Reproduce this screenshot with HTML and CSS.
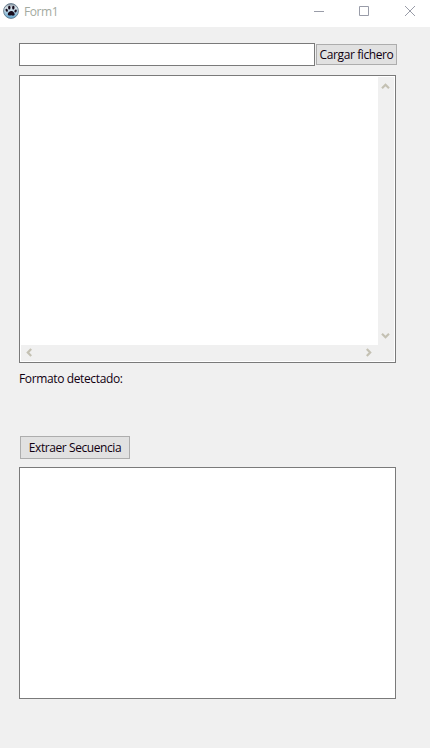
FILE: index.html
```html
<!DOCTYPE html>
<html lang="es">
<head>
<meta charset="utf-8">
<title>Form1</title>
<link rel="stylesheet" href="styles.css">
</head>
<body>
<header class="titlebar">
  <svg class="app-icon" width="16" height="16" viewBox="0 0 16 16">
    <defs><linearGradient id="ball" x1="0" y1="0" x2="0" y2="1"><stop offset="0" stop-color="#8794a0"/><stop offset=".3" stop-color="#dce6ec"/><stop offset="1" stop-color="#5fa5cf"/></linearGradient></defs>
    <circle cx="8" cy="8" r="7.4" fill="url(#ball)" stroke="#607688" stroke-width=".9"/>
    <g fill="#170b1c">
      <ellipse cx="6.300" cy="4.700" rx="1.200" ry="1.900"/><ellipse cx="10.300" cy="4.700" rx="1.200" ry="1.900"/>
      <ellipse cx="3.700" cy="7.300" rx="1.100" ry="1.600" transform="rotate(-25 3.7 7.3)"/><ellipse cx="12.600" cy="8" rx="1.100" ry="1.600" transform="rotate(25 12.6 8)"/>
      <path d="M8.400 8C10 8 11.900 10.200 11.700 11.600c-.2 1.200-1.700 1.400-3.500.7-1.900.4-3.400.1-3.400-1.100C4.800 9.800 6.800 8 8.400 8z"/>
    </g>
  </svg>
  <span class="title">Form1</span>
  <div class="window-controls">
    <svg width="45" height="27" viewBox="0 0 45 27"><path d="M17 11.500h10"/></svg>
    <svg width="45" height="27" viewBox="0 0 45 27"><path d="M17.500 6.500h9v9h-9z"/></svg>
    <svg width="45" height="27" viewBox="0 0 45 27"><path d="M18 6l10 10M28 6L18 16"/></svg>
  </div>
</header>
<main class="form">
  <div class="file-row">
    <div class="edit"></div>
    <button class="button load"><span>Cargar fichero</span></button>
  </div>
  <div class="memo source">
    <div class="text-area"></div>
    <div class="scroll vertical">
      <svg width="9" height="7" viewBox="0 0 9 7"><path d="M1 5.200L4.500 1.800L8 5.200"/></svg>
      <svg width="9" height="7" viewBox="0 0 9 7"><path d="M1 1.800L4.500 5.200L8 1.800"/></svg>
    </div>
    <div class="scroll horizontal">
      <svg width="7" height="9" viewBox="0 0 7 9"><path d="M5.200 1L1.800 4.500L5.200 8"/></svg>
      <svg width="7" height="9" viewBox="0 0 7 9"><path d="M1.800 1L5.200 4.500L1.800 8"/></svg>
    </div>
    <div class="corner"></div>
  </div>
  <div class="format-label"><span>Formato detectado:</span></div>
  <button class="button extract"><span>Extraer Secuencia</span></button>
  <div class="memo result"></div>
</main>
</body>
</html>
```
FILE: styles.css
```css
* { box-sizing: border-box; }
body {
  margin: 0;
  height: 748px;
  overflow: hidden;
  background: #f0f0f0;
  color: #100010;
  font: 12px/16px "Open Sans", "Noto Sans", sans-serif;
  white-space: nowrap;
}
svg { display: block; }
.titlebar {
  display: flex;
  height: 27px;
  padding-left: 3px;
  background: #fff;
}
.app-icon { margin-top: 3px; }
.title {
  margin: 4px 0 0 5px;
  color: #a3aaa0;
  letter-spacing: -0.4px;
}
.window-controls {
  display: flex;
  margin-left: auto;
  margin-right: -2px;
}
.window-controls path {
  fill: none;
  stroke: #999ca8;
  stroke-width: 1;
}
.form { padding: 16px 33px 0 19px; }
.file-row {
  display: flex;
  align-items: center;
  gap: 1px;
}
.edit {
  width: 296px;
  height: 23px;
  border: 1px solid #7a7a7a;
  background: #fff;
}
.button {
  display: flex;
  align-items: center;
  justify-content: center;
  padding: 0;
  border: 1px solid #adadad;
  border-radius: 0;
  background: #e1e1e1;
  color: inherit;
  font: inherit;
}
.load { width: 81px; height: 21px; letter-spacing: -0.4px; }
.memo {
  width: 377px;
  border: 1px solid #7a7a7a;
  background: #fff;
}
.source {
  display: grid;
  grid-template-columns: 357px 16px;
  grid-template-rows: 268px 16px;
  height: 288px;
  margin-top: 9px;
  padding: 1px;
}
.scroll, .corner { background: #f0f0f0; }
.scroll {
  display: flex;
  justify-content: space-between;
}
.scroll path { fill: none; stroke: #c4c1b3; stroke-width: 2.2; }
.vertical { flex-direction: column; padding: 6px 0 6px 3px; }
.horizontal { padding: 3px 6px 0 5px; }
.format-label { margin-top: 8px; letter-spacing: -0.37px; }
.extract {
  width: 110px;
  height: 23px;
  margin: 49px 0 0 1px;
  letter-spacing: -0.42px;
}
.result { height: 232px; margin-top: 8px; }
```
